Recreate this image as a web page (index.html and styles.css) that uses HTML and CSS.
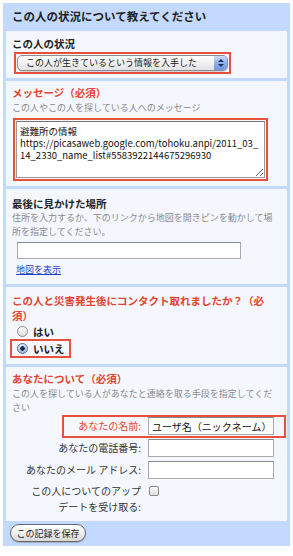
FILE: index.html
```html
<!DOCTYPE html>
<html lang="ja">
<head>
    <meta charset="UTF-8">
    <meta name="viewport" content="width=device-width, initial-scale=1.0">
    <title>この人の状況について教えてください</title>
    <link rel="stylesheet" href="styles.css">
</head>
<body>
    <div class="page">
        <div class="title">この人の状況について教えてください</div>

        <div class="section section-status">
            <div class="label">この人の状況</div>
            <div class="hl hl-select">
                <div class="select-wrap">
                    <select class="select">
                        <option>この人が生きているという情報を入手した</option>
                    </select>
                    <span class="select-arrow">
                        <svg width="6" height="10" viewBox="0 0 6 10">
                            <path d="M0 4 L3 1 L6 4 Z" fill="#1d2f5c"/>
                            <path d="M0 6 L3 9 L6 6 Z" fill="#1d2f5c"/>
                        </svg>
                    </span>
                </div>
            </div>
        </div>

        <div class="section section-message">
            <div class="label required">メッセージ（必須）</div>
            <div class="hint">この人やこの人を探している人へのメッセージ</div>
            <div class="hl hl-text">
                <textarea class="textarea">避難所の情報
https://picasaweb.google.com/tohoku.anpi/2011_03_
14_2330_name_list#5583922144675296930</textarea>
            </div>
        </div>

        <div class="section section-place">
            <div class="label">最後に見かけた場所</div>
            <div class="hint">住所を入力するか、下のリンクから地図を開きピンを動かして場所を指定してください。</div>
            <input type="text" class="input input-place">
            <a href="#" class="map-link">地図を表示</a>
        </div>

        <div class="section section-contact">
            <div class="label required">この人と災害発生後にコンタクト取れましたか？（必<br>須）</div>
            <label class="radio-row">
                <input type="radio" name="contact" class="radio">
                <span>はい</span>
            </label>
            <div class="hl hl-radio">
                <label class="radio-row">
                    <input type="radio" name="contact" class="radio" checked>
                    <span>いいえ</span>
                </label>
            </div>
        </div>

        <div class="section section-you">
            <div class="label required">あなたについて（必須）</div>
            <div class="hint">この人を探している人があなたと連絡を取る手段を指定してください</div>
            <div class="form-grid">
                <div class="form-row row-name">
                    <div class="form-label">あなたの名前:</div>
                    <input type="text" class="input" value="ユーザ名（ニックネーム）">
                </div>
                <div class="form-row">
                    <div class="form-label">あなたの電話番号:</div>
                    <input type="text" class="input">
                </div>
                <div class="form-row">
                    <div class="form-label">あなたのメール アドレス:</div>
                    <input type="text" class="input">
                </div>
                <div class="form-row row-check">
                    <div class="form-label">この人についてのアップ<br>デートを受け取る:</div>
                    <input type="checkbox" class="checkbox">
                </div>
            </div>
        </div>

        <button class="save-button">この記録を保存</button>
    </div>
</body>
</html>
```

FILE: styles.css
```css
* {
    box-sizing: border-box;
}

body {
    margin: 0;
    background: #fff;
    font-family: "Noto Sans CJK JP", "Noto Sans", sans-serif;
    color: #222;
}

.page {
    margin: 3px 3px 0 3px;
    width: 287px;
    padding: 0 3px 4px 3px;
    background: #c3d9ff;
}

.title {
    height: 28px;
    line-height: 26px;
    padding-left: 6px;
    font-size: 11.5px;
    font-weight: bold;
    color: #222;
}

.section {
    background: #f5f7ff;
    margin-bottom: 3px;
    padding: 6px 6px 6px 6px;
}

.label {
    font-size: 10.5px;
    font-weight: bold;
    line-height: 14px;
    color: #222;
}

.label.required {
    color: #e4432e;
}

.hint {
    font-size: 9px;
    line-height: 14px;
    color: #8a8a8a;
}

/* red highlight boxes */
.hl {
    width: max-content;
    border: 2px solid #e8503e;
    padding: 1px;
}

/* status select */
.section-status {
    padding-bottom: 4px;
}

.hl-select {
    margin: 1px 0 0 2px;
}

.select-wrap {
    position: relative;
    width: 211px;
    height: 16px;
}

.select {
    appearance: none;
    -webkit-appearance: none;
    display: block;
    width: 211px;
    height: 16px;
    margin: 0;
    padding: 0 0 0 8px;
    border: 1px solid #8c8c8c;
    border-radius: 5px;
    background: linear-gradient(#ffffff, #f1f1f1 50%, #e2e2e2);
    font-family: "Noto Sans CJK JP", sans-serif;
    font-size: 9px;
    line-height: 14px;
    color: #222;
    box-shadow: 0 1px 1px rgba(0, 0, 0, 0.15);
}

.select-arrow {
    position: absolute;
    top: 1px;
    right: 1px;
    bottom: 1px;
    width: 13px;
    border-radius: 0 4px 4px 0;
    background: linear-gradient(#cfdef8, #8fb0ea 50%, #6f97e0);
    display: flex;
    align-items: center;
    justify-content: center;
}

/* message */
.section-message {
    padding-top: 5px;
    padding-bottom: 5px;
}

.section-message .hint {
    line-height: 16px;
}

.hl-text {
    margin: 2px 0 0 1px;
}

.textarea {
    display: block;
    width: 249px;
    height: 57px;
    margin: 0;
    padding: 3px 3px;
    border: 1px solid #999;
    border-top-color: #777;
    background: #fff;
    font-family: "Noto Sans CJK JP", sans-serif;
    font-size: 9.5px;
    line-height: 12px;
    color: #111;
    resize: vertical;
}

/* place */
.section-place {
    padding-top: 8px;
    padding-bottom: 7px;
}

.input {
    height: 18px;
    margin: 0;
    padding: 0 3px;
    border: 1px solid #aaa;
    border-top-color: #888;
    background: #fff;
    font-family: "Noto Sans CJK JP", sans-serif;
    font-size: 10px;
    color: #111;
}

.input-place {
    display: block;
    width: 224px;
    height: 17px;
    margin: 3px 0 0 5px;
}

.map-link {
    display: block;
    width: max-content;
    margin: 4px 0 0 4px;
    font-size: 9px;
    line-height: 14px;
    color: #1a3fbf;
}

/* contact */
.section-contact {
    padding-top: 6px;
    padding-bottom: 6px;
}

.section-contact .label {
    line-height: 15px;
    margin-bottom: 1px;
}

.radio-row {
    display: flex;
    align-items: center;
    gap: 5px;
    height: 15px;
    padding-left: 5px;
    font-size: 10.5px;
    font-weight: bold;
}

.radio {
    appearance: none;
    -webkit-appearance: none;
    width: 11px;
    height: 11px;
    margin: 0;
    border: 1px solid #8a8a8a;
    border-radius: 50%;
    background: linear-gradient(#fdfdfd, #dcdcdc);
}

.radio:checked {
    border-color: #5a6f98;
    background: radial-gradient(circle, #1f2a44 0 2px, transparent 2.5px), linear-gradient(#dbe6fb, #9db8ea);
}

.hl-radio {
    margin-left: -2px;
    padding: 0 4px 0 0;
}

/* about you */
.section-you {
    padding-top: 5px;
}

.section-you .hint {
    margin-top: 1px;
}

.form-grid {
    display: flex;
    flex-direction: column;
    gap: 4px;
    margin-top: 2px;
}

.form-row {
    display: grid;
    grid-template-columns: 129px 126px;
    column-gap: 7px;
    align-items: center;
}

.form-label {
    text-align: right;
    font-size: 10px;
    line-height: 16px;
    color: #333;
}

.row-name {
    position: relative;
}

.row-name .form-label {
    color: #e4432e;
}

.row-name::after {
    content: "";
    position: absolute;
    left: 50px;
    right: -5px;
    top: -2px;
    bottom: -3px;
    border: 2px solid #e8503e;
}

.row-check {
    align-items: start;
}

.checkbox {
    appearance: none;
    -webkit-appearance: none;
    width: 10px;
    height: 10px;
    margin: 3px 0 0 1px;
    border: 1px solid #8a8a8a;
    border-radius: 2px;
    background: linear-gradient(#fdfdfd, #dcdcdc);
}

.save-button {
    display: block;
    margin: 3px 0 0 4px;
    width: 76px;
    height: 18px;
    padding: 0;
    border: 1px solid #666;
    border-radius: 9px;
    background: linear-gradient(#ffffff, #f0f0f0 50%, #d8d8d8);
    font-family: "Noto Sans CJK JP", sans-serif;
    font-size: 9px;
    color: #222;
    box-shadow: 0 1px 1px rgba(0, 0, 0, 0.2);
}
```
